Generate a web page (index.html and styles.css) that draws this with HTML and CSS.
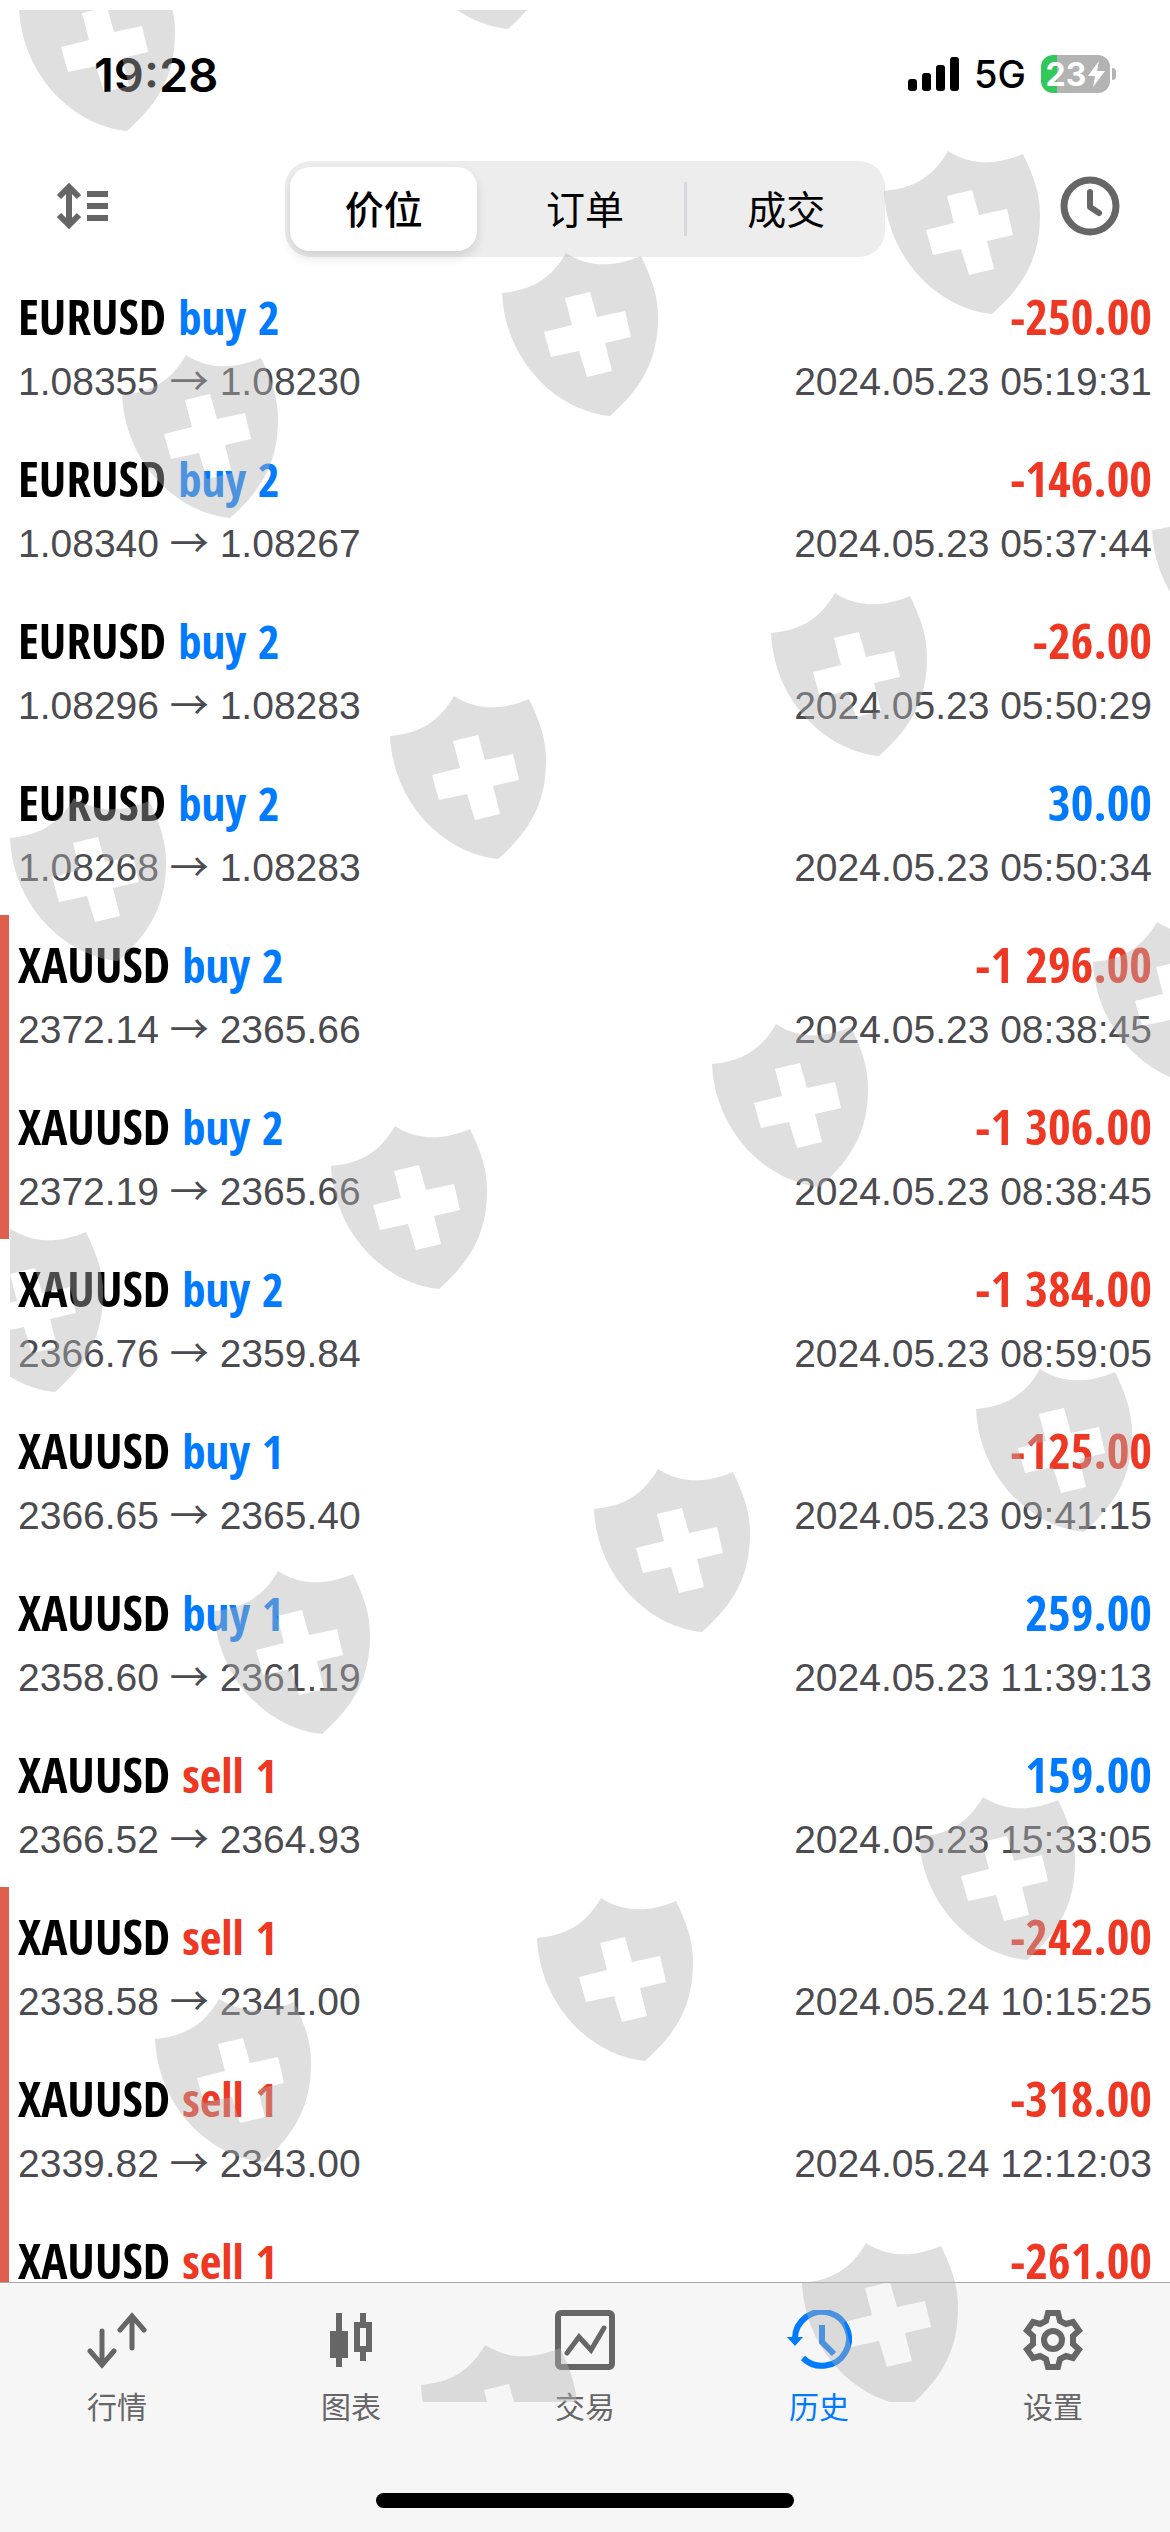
FILE: index.html
```
<!DOCTYPE html>
<html lang="zh-CN">
<head>
<meta charset="utf-8">
<meta name="viewport" content="width=device-width, initial-scale=1">
<title>历史</title>
<link rel="stylesheet" href="styles.css">
</head>
<body>
<div class="app">
  <div class="status">
    <time class="clock">19:28</time>
    <div class="status-right">
      <svg class="signal" width="51" height="34" viewBox="0 0 51 34" aria-hidden="true">
        <rect x="0" y="22" width="9" height="12" rx="3"/>
        <rect x="14" y="16" width="9" height="18" rx="3"/>
        <rect x="28" y="8" width="9" height="26" rx="3"/>
        <rect x="42" y="0" width="9" height="34" rx="3"/>
      </svg>
      <span class="network">5G</span>
      <div class="battery">
        <span>23</span>
        <svg width="17" height="26" viewBox="0 0 17 26" aria-hidden="true"><path d="M11 0 0 15h7L5 26 17 10H9z" fill="#fff"/></svg>
      </div>
    </div>
  </div>

  <header class="toolbar">
    <button class="icon-button" aria-label="排序">
      <svg width="54" height="48" viewBox="0 0 54 48" fill="none" stroke="#666" stroke-width="6">
        <path d="M13 4v40M3 15 13 5l10 10M3 33l10 10 10-10"/>
        <path d="M31 12h21M31 24h21M31 36h21"/>
      </svg>
    </button>
    <div class="segments">
      <button class="segment selected">价位</button>
      <button class="segment">订单</button>
      <button class="segment divided">成交</button>
    </div>
    <button class="icon-button" aria-label="时间">
      <svg width="60" height="60" viewBox="0 0 60 60" fill="none" stroke="#666" stroke-width="7" stroke-linecap="round" stroke-linejoin="round">
        <circle cx="30" cy="30" r="26"/>
        <path stroke-width="6" d="M30 16v15l9 6"/>
      </svg>
    </button>
  </header>

  <main class="list">
    <ul>
      <li class="deal"><div class="line main"><span>EURUSD <b class="side up">buy 2</b></span><b class="down">-250.00</b></div><div class="line detail"><span>1.08355 <i>→</i> 1.08230</span><time>2024.05.23 05:19:31</time></div></li>
      <li class="deal"><div class="line main"><span>EURUSD <b class="side up">buy 2</b></span><b class="down">-146.00</b></div><div class="line detail"><span>1.08340 <i>→</i> 1.08267</span><time>2024.05.23 05:37:44</time></div></li>
      <li class="deal"><div class="line main"><span>EURUSD <b class="side up">buy 2</b></span><b class="down">-26.00</b></div><div class="line detail"><span>1.08296 <i>→</i> 1.08283</span><time>2024.05.23 05:50:29</time></div></li>
      <li class="deal"><div class="line main"><span>EURUSD <b class="side up">buy 2</b></span><b class="up">30.00</b></div><div class="line detail"><span>1.08268 <i>→</i> 1.08283</span><time>2024.05.23 05:50:34</time></div></li>
      <li class="deal stopped"><div class="line main"><span>XAUUSD <b class="side up">buy 2</b></span><b class="down">-1 296.00</b></div><div class="line detail"><span>2372.14 <i>→</i> 2365.66</span><time>2024.05.23 08:38:45</time></div></li>
      <li class="deal stopped"><div class="line main"><span>XAUUSD <b class="side up">buy 2</b></span><b class="down">-1 306.00</b></div><div class="line detail"><span>2372.19 <i>→</i> 2365.66</span><time>2024.05.23 08:38:45</time></div></li>
      <li class="deal"><div class="line main"><span>XAUUSD <b class="side up">buy 2</b></span><b class="down">-1 384.00</b></div><div class="line detail"><span>2366.76 <i>→</i> 2359.84</span><time>2024.05.23 08:59:05</time></div></li>
      <li class="deal"><div class="line main"><span>XAUUSD <b class="side up">buy 1</b></span><b class="down">-125.00</b></div><div class="line detail"><span>2366.65 <i>→</i> 2365.40</span><time>2024.05.23 09:41:15</time></div></li>
      <li class="deal"><div class="line main"><span>XAUUSD <b class="side up">buy 1</b></span><b class="up">259.00</b></div><div class="line detail"><span>2358.60 <i>→</i> 2361.19</span><time>2024.05.23 11:39:13</time></div></li>
      <li class="deal"><div class="line main"><span>XAUUSD <b class="side down">sell 1</b></span><b class="up">159.00</b></div><div class="line detail"><span>2366.52 <i>→</i> 2364.93</span><time>2024.05.23 15:33:05</time></div></li>
      <li class="deal stopped"><div class="line main"><span>XAUUSD <b class="side down">sell 1</b></span><b class="down">-242.00</b></div><div class="line detail"><span>2338.58 <i>→</i> 2341.00</span><time>2024.05.24 10:15:25</time></div></li>
      <li class="deal stopped"><div class="line main"><span>XAUUSD <b class="side down">sell 1</b></span><b class="down">-318.00</b></div><div class="line detail"><span>2339.82 <i>→</i> 2343.00</span><time>2024.05.24 12:12:03</time></div></li>
      <li class="deal stopped"><div class="line main"><span>XAUUSD <b class="side down">sell 1</b></span><b class="down">-261.00</b></div></li>
    </ul>
  </main>

  <nav class="tabbar">
    <div class="tabs">
      <a class="tab" href="#quotes">
        <svg width="60" height="60" viewBox="0 0 60 60" fill="none" stroke="currentColor" stroke-width="5" stroke-linecap="round"><path d="M15 21v34M3 41l12 14 12-14M45 38V6M33 20 45 6l12 14"/></svg>
        <span>行情</span>
      </a>
      <a class="tab" href="#charts">
        <svg width="60" height="60" viewBox="0 0 60 60"><path fill="currentColor" fill-rule="evenodd" d="M15 3h6v18h6v27h-6v9h-6v-9H9V21h6zM39 3h6v9h6v30h-6v9h-6v-9h-6V12h6zM39 18v18h6V18z"/></svg>
        <span>图表</span>
      </a>
      <a class="tab" href="#trade">
        <svg width="60" height="60" viewBox="0 0 60 60" fill="none" stroke="currentColor" stroke-width="6" stroke-linecap="round"><rect x="3" y="3" width="54" height="54" rx="3"/><path stroke-width="5" d="M12 43 24 27l12 13 13-22"/></svg>
        <span>交易</span>
      </a>
      <a class="tab active" href="#history">
        <svg width="66" height="60" viewBox="0 0 66 60" fill="none" stroke="currentColor" stroke-width="6"><path d="M9 28A27 27 0 1 1 17 48M36 15v17l12 12"/><path fill="currentColor" stroke="none" d="M1 27h16l-8 9z"/></svg>
        <span>历史</span>
      </a>
      <a class="tab" href="#settings">
        <svg width="60" height="60" viewBox="0 0 60 60" fill="none" stroke="currentColor" stroke-width="6"><path d="M35 3 37 11 43 14 50 12 56 20.500 50 26V34L56 39.500 50 48 43 46 37 49 35 57H25L23 49 17 46 10 48 4 39.500 10 34V26L4 20.500 10 12 17 14 23 11 25 3z"/><circle cx="30" cy="30" r="9"/></svg>
        <span>设置</span>
      </a>
    </div>
    <div class="home-indicator"></div>
  </nav>

  <div class="watermark" aria-hidden="true">
    <svg width="1160" height="2392" viewBox="10 10 1160 2392">
      <defs>
        <path id="shield" fill-rule="evenodd" d="M0 40C30 37 49 26 64 0C86 14 110 15 139 3C150 26 156 43 156 64C156 105 142 133 108 163C55 158 3 108 0 40ZM63 45 70 72 42 79 49 104 77 98 85 124 110 118 103 90 129 84 123 58 95 64 88 39Z"/>
      </defs>
      <g fill="#b2b2b2" fill-opacity=".42">
        <use href="#shield" x="19" y="-32"/>
        <use href="#shield" x="400" y="-134"/>
        <use href="#shield" x="884" y="151"/>
        <use href="#shield" x="502" y="253"/>
        <use href="#shield" x="122" y="355"/>
        <use href="#shield" x="1152" y="490"/>
        <use href="#shield" x="771" y="593"/>
        <use href="#shield" x="390" y="696"/>
        <use href="#shield" x="10" y="798"/>
        <use href="#shield" x="1093" y="922"/>
        <use href="#shield" x="712" y="1024"/>
        <use href="#shield" x="331" y="1126"/>
        <use href="#shield" x="-53" y="1229"/>
        <use href="#shield" x="976" y="1369"/>
        <use href="#shield" x="594" y="1469"/>
        <use href="#shield" x="214" y="1571"/>
        <use href="#shield" x="919" y="1797"/>
        <use href="#shield" x="537" y="1898"/>
        <use href="#shield" x="155" y="1999"/>
        <use href="#shield" x="802" y="2243"/>
        <use href="#shield" x="421" y="2345"/>
      </g>
    </svg>
  </div>
</div>
</body>
</html>
```
FILE: styles.css
```
* {
  box-sizing: border-box;
}

body {
  margin: 0;
  background: #fff;
  color: #000;
  font-family: "Liberation Sans", "Noto Sans CJK SC", sans-serif;
}

button {
  padding: 0;
  border: 0;
  background: none;
  color: inherit;
  font: inherit;
}

svg {
  display: block;
}

.app {
  position: relative;
  display: flex;
  flex-direction: column;
  height: 100vh;
  overflow: hidden;
}

/* Status bar */
.status {
  display: flex;
  align-items: center;
  justify-content: space-between;
  height: 148px;
  padding: 0 60px 0 94px;
  font-family: Inter, sans-serif;
}

.clock {
  font-size: 47px;
  font-weight: 600;
}

.status-right {
  display: flex;
  align-items: center;
  gap: 15px;
}

.network {
  font-size: 38px;
  font-weight: 500;
}

.battery {
  position: relative;
  display: flex;
  align-items: center;
  justify-content: center;
  gap: 2px;
  width: 69px;
  height: 38px;
  border-radius: 12px;
  background: linear-gradient(90deg, #34c759 16px, #b3b3b3 16px);
  color: #fff;
  font-size: 32px;
  font-weight: 700;
}

.battery::after {
  content: "";
  position: absolute;
  left: 71px;
  top: 13px;
  width: 4px;
  height: 12px;
  border-radius: 0 4px 4px 0;
  background: #b3b3b3;
}

/* Toolbar */
.toolbar {
  display: flex;
  align-items: center;
  justify-content: space-between;
  height: 119px;
  padding: 0 50px 3px 56px;
}

.segments {
  display: grid;
  grid-template-columns: repeat(3, 1fr);
  gap: 14px;
  width: 600px;
  height: 96px;
  margin-top: 6px;
  padding: 6px 5px;
  border-radius: 26px;
  background: #ededee;
}

.icon-button {
  display: flex;
}

.segment {
  position: relative;
  padding-bottom: 4px;
  border-radius: 20px;
  font-family: "Noto Sans CJK SC", sans-serif;
  font-size: 39px;
}

.segment.selected {
  background: #fff;
  box-shadow: 0 6px 12px rgba(0, 0, 0, 0.12);
  font-weight: 500;
}

.segment.divided::before {
  content: "";
  position: absolute;
  left: -9px;
  top: 15px;
  bottom: 15px;
  width: 3px;
  background: #d8d8e0;
}

/* Deals */
.list {
  flex: 1;
  min-height: 0;
  overflow: hidden;
}

.list ul {
  margin: 0;
  padding: 0;
  list-style: none;
}

.deal {
  padding: 27px 18px 23px 9px;
  border-left: 9px solid transparent;
}

.deal.stopped {
  border-left-color: #e05e4e;
}

.line {
  display: flex;
  justify-content: space-between;
  white-space: nowrap;
}

.main {
  margin-bottom: 20px;
  font-family: "Open Sans Condensed", "Open Sans", sans-serif;
  font-size: 49px;
  font-weight: 700;
  line-height: 44px;
}

.side {
  font-size: 47px;
  line-height: 40px;
}

.up {
  color: #007aff;
}

.down {
  color: #ee3824;
}

.detail {
  color: #4b4b50;
  font-size: 39px;
  font-kerning: none;
  line-height: 48px;
}

.detail i {
  font-family: "Noto Sans CJK SC", sans-serif;
  font-style: normal;
  line-height: 1;
}

/* Tab bar */
.tabbar {
  padding: 27px 0 24px;
  border-top: 1px solid #a9a9ab;
  background: #f6f6f6;
}

.tabs {
  display: grid;
  grid-template-columns: repeat(5, 1fr);
}

.tab {
  display: flex;
  flex-direction: column;
  align-items: center;
  gap: 13px;
  color: #666;
  font-family: "Noto Sans CJK SC", sans-serif;
  font-size: 30px;
  line-height: 44px;
  text-decoration: none;
}

.tab.active {
  color: #007aff;
}

.home-indicator {
  width: 418px;
  height: 15px;
  margin: 66px auto 0;
  border-radius: 8px;
  background: #000;
}

/* Shield pattern laid over the whole screen */
.watermark {
  position: absolute;
  inset: 10px 0 130px 10px;
  overflow: hidden;
  pointer-events: none;
}
```
